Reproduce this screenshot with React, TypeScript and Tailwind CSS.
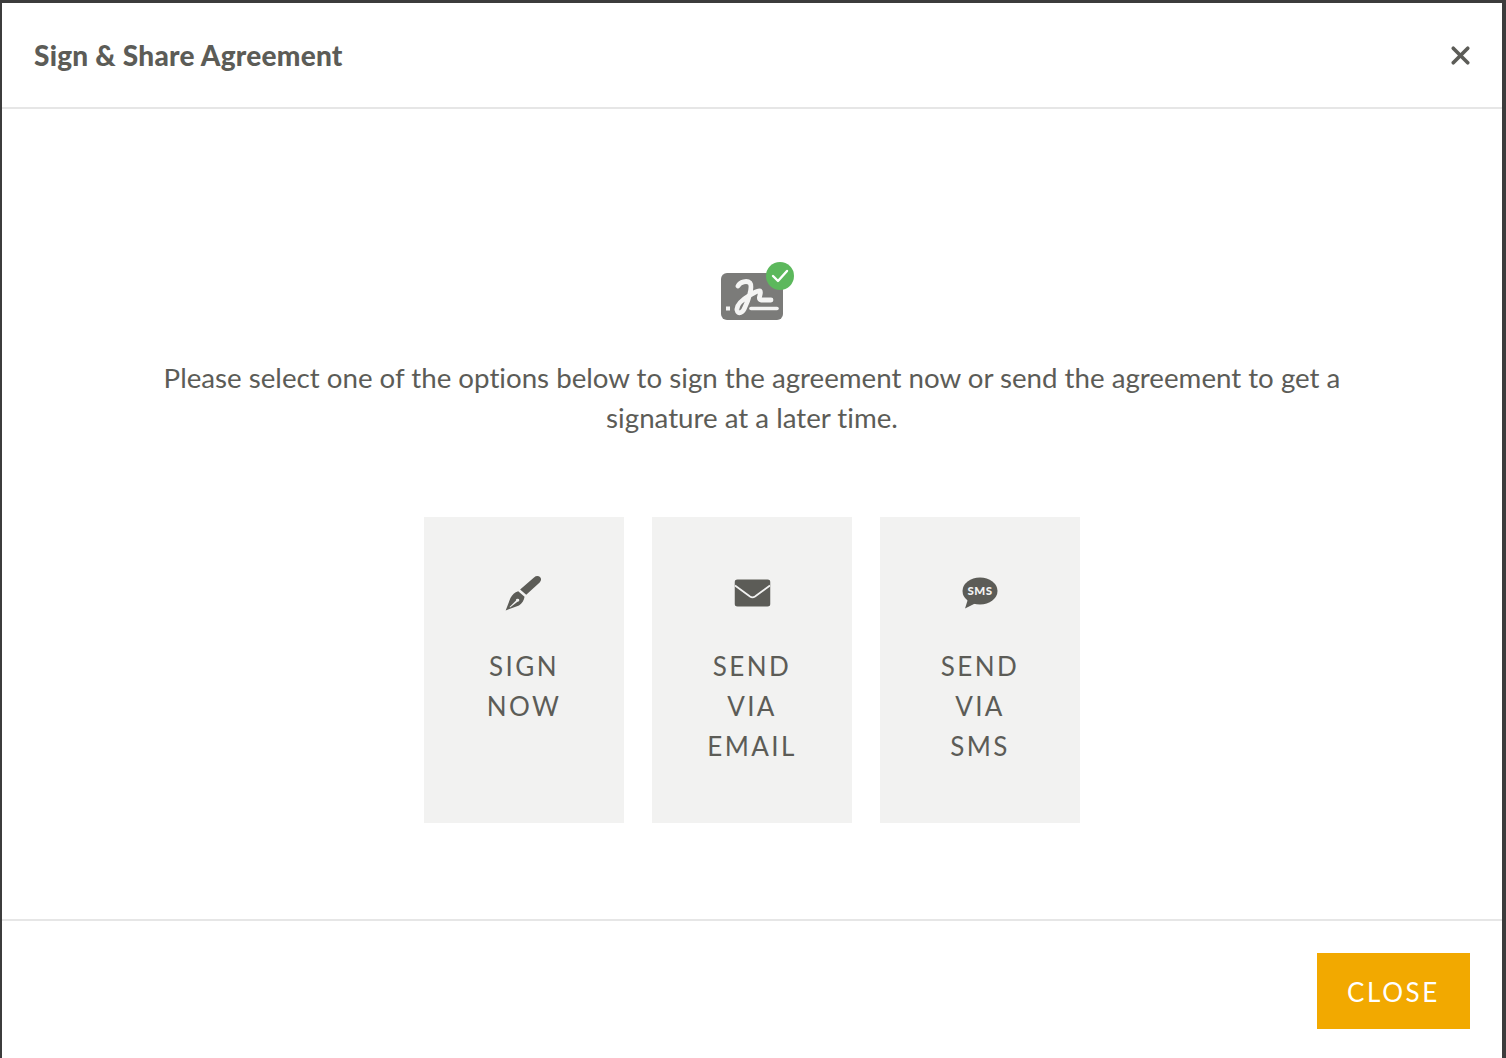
import { X } from 'lucide-react'

const FONT = 'font-["Lato","Noto_Sans",sans-serif] [font-variant-ligatures:none]'

function SignatureIcon() {
  return (
    <svg width="86" height="62" viewBox="-10 0 86 62" aria-hidden="true">
      <rect x="2" y="12" width="62" height="47" rx="6" fill="#7b7b79" />
      <path
        d="M19 25c2-4 9-6 12-3 3 4-2 18-5 24-2 6-7 8-8 3-1-6 8-12 13-15 4-2 8-5 10-4 2 2-3 8 1 9h10"
        fill="none"
        stroke="#f4f4f3"
        strokeWidth="4.800"
        strokeLinecap="round"
        strokeLinejoin="round"
      />
      <path d="M32 47.500h26" fill="none" stroke="#f4f4f3" strokeWidth="3.600" strokeLinecap="round" />
      <rect x="7" y="45.500" width="4" height="4" fill="#f4f4f3" />
      <circle cx="61" cy="15" r="14" fill="#5cb85c" />
      <path d="M54 15l5 5 9-10" fill="none" stroke="#fff" strokeWidth="2.400" strokeLinecap="round" strokeLinejoin="round" />
    </svg>
  )
}

function PenIcon() {
  return (
    <svg width="40" height="38" viewBox="0 0 36 38" preserveAspectRatio="none" fill="#5c5c57" aria-hidden="true">
      <path d="M14.500 15.500 27 3.400c1.800-1.600 4-1.700 5.400-.3s1.300 3.600-.3 5.400L20 20.800z" />
      <path
        fillRule="evenodd"
        d="M12.800 17.200 18.500 22.800c-.4 3.600-2.300 6.700-5 8.600L1.500 36.400 5.800 24c1.700-3.400 3.700-5.800 7-6.800zM5 33l5.800-6.600a1.500 1.500 0 1 1 1.300 1.300L5.500 33.500z"
      />
    </svg>
  )
}

function MailIcon() {
  return (
    <svg width="36" height="28" viewBox="0 0 36 28" className="translate-x-[0.5px]" aria-hidden="true">
      <rect y="0.500" width="36" height="27" rx="3" fill="#5c5c57" />
      <path d="M0.500 6.500 15.500 17.500c1.500 1 3.500 1 5 0L35.500 6.500" fill="none" stroke="#f2f2f1" strokeWidth="1.800" />
    </svg>
  )
}

function SmsIcon() {
  return (
    <svg width="36" height="32" viewBox="0 0 36 32" aria-hidden="true">
      <ellipse cx="18" cy="14" rx="17.500" ry="13.500" fill="#5c5c57" />
      <path d="M6 22 3 31.500 14 26z" fill="#5c5c57" />
      <text x="18" y="18" textAnchor="middle" fontFamily="Lato, sans-serif" fontWeight="900" fontSize="11.500" letterSpacing="0.500" fill="#f2f2f1">
        SMS
      </text>
    </svg>
  )
}

const OPTIONS = [
  { icon: <PenIcon />, lines: ['SIGN', 'NOW'] },
  { icon: <MailIcon />, lines: ['SEND', 'VIA', 'EMAIL'] },
  { icon: <SmsIcon />, lines: ['SEND', 'VIA', 'SMS'] },
]

export default function App() {
  return (
    <div className={`flex h-[1058px] w-[1506px] flex-col overflow-hidden border-t-[3px] border-r-4 border-l-2 border-[#3c3c3c] bg-white text-[#5c5c57] ${FONT}`}>
      <header className="flex h-[106px] shrink-0 items-center justify-between border-b-2 border-[#e6e6e6] pr-[27px] pl-[32px]">
        <h1 className="text-[28px] font-black tracking-[0.25px]">Sign &amp; Share Agreement</h1>
        <button aria-label="Close" className="text-[#5c5c57]">
          <X className="h-[29px] w-[29px]" strokeWidth={3} />
        </button>
      </header>

      <main className="flex min-h-0 flex-1 flex-col items-center pt-[152px]">
        <SignatureIcon />
        <p className="mt-[35px] w-[1200px] text-center text-[27.7px] leading-[40px]">
          Please select one of the options below to sign the agreement now or send the agreement to get a signature at a later time.
        </p>
        <div className="mt-[79px] flex gap-[28px]">
          {OPTIONS.map((opt, i) => (
            <button key={i} className="flex h-[306px] w-[200px] flex-col items-center bg-[#f2f2f1] pt-[57px]">
              <span className="flex h-[38px] items-center">{opt.icon}</span>
              <span className="mt-[34px] flex flex-col text-[26px] leading-[40px] tracking-[2.4px]">
                {opt.lines.map((line) => (
                  <span key={line}>{line}</span>
                ))}
              </span>
            </button>
          ))}
        </div>
      </main>

      <footer className="flex h-[139px] shrink-0 justify-end border-t-2 border-[#e6e6e6] pt-[32px] pr-[32px]">
        <button className="flex h-[76px] w-[153px] items-center justify-center bg-[#f2a900] pt-[2px] text-[26px] tracking-[2.6px] text-white">
          CLOSE
        </button>
      </footer>
    </div>
  )
}
